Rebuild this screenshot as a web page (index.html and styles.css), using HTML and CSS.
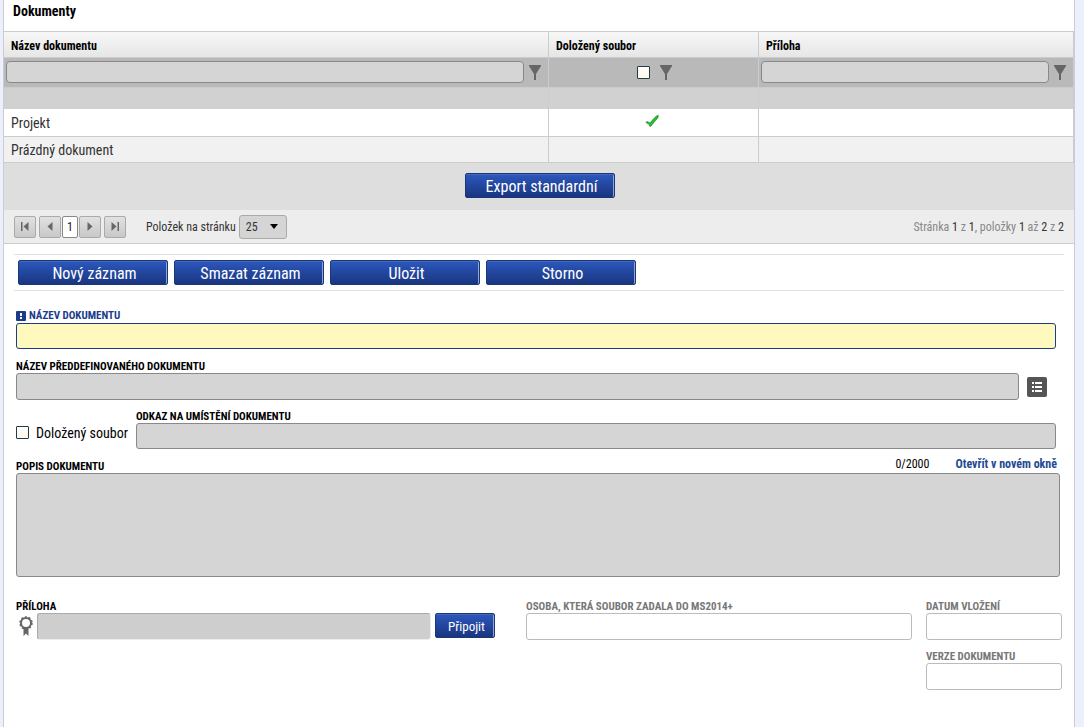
FILE: index.html
```
<!DOCTYPE html>
<html lang="cs">
<head>
<meta charset="utf-8">
<meta name="viewport" content="width=device-width, initial-scale=1">
<title>Dokumenty</title>
<link rel="stylesheet" href="styles.css">
</head>
<body>
<main class="panel">
  <h1 class="title">Dokumenty</h1>

  <section class="grid">
    <table class="grid-table">
      <colgroup><col><col class="col-file"><col class="col-attachment"></colgroup>
      <thead>
        <tr class="head-row">
          <th scope="col">Název dokumentu</th>
          <th scope="col">Doložený soubor</th>
          <th scope="col">Příloha</th>
        </tr>
        <tr class="filter-row">
          <td>
            <div class="filter">
              <input class="filter-input" type="text" aria-label="Filtr: Název dokumentu">
              <button class="filter-button" type="button" aria-label="Filtrovat název"><svg width="12" height="15" viewBox="0 0 12 15"><path d="M0 0h12v1L7 9v6H5V9L0 1z"/></svg></button>
            </div>
          </td>
          <td>
            <div class="filter filter-center">
              <input class="check" type="checkbox" aria-label="Filtr: Doložený soubor">
              <button class="filter-button" type="button" aria-label="Filtrovat soubor"><svg width="12" height="15" viewBox="0 0 12 15"><path d="M0 0h12v1L7 9v6H5V9L0 1z"/></svg></button>
            </div>
          </td>
          <td>
            <div class="filter">
              <input class="filter-input" type="text" aria-label="Filtr: Příloha">
              <button class="filter-button" type="button" aria-label="Filtrovat přílohu"><svg width="12" height="15" viewBox="0 0 12 15"><path d="M0 0h12v1L7 9v6H5V9L0 1z"/></svg></button>
            </div>
          </td>
        </tr>
      </thead>
      <tbody>
        <tr class="group-row"><td></td><td></td><td></td></tr>
        <tr class="data-row">
          <td>Projekt</td>
          <td class="tick-cell"><svg class="tick" role="img" aria-label="Ano" width="14" height="14" viewBox="0 0 14 14"><path d="M.5 8.500L2 7l3 1.500L8 5l3-3 2.500-1.500v3L10.500 7 6 12.500l-1 .5-1.500-2.500z" fill="#25a52b"/><path d="M3 9l2.500 1.500L11.500 3.500" fill="none" stroke="#45cc48"/></svg></td>
          <td></td>
        </tr>
        <tr class="data-row alt">
          <td>Prázdný dokument</td>
          <td></td>
          <td></td>
        </tr>
      </tbody>
    </table>
    <div class="export-bar"><button class="button" type="button">Export standardní</button></div>
    <div class="pager">
      <nav class="pager-nav" aria-label="Stránkování">
        <button class="page-button" type="button" aria-label="První"><svg width="8" height="9" viewBox="0 0 8 9"><path d="M0 0h1.500v9H0zM7.500 0v9L2.500 4.500z"/></svg></button>
        <div class="page-group">
          <button class="page-button" type="button" aria-label="Předchozí"><svg width="8" height="9" viewBox="0 0 8 9"><path d="M6.500 0v9L1.500 4.500z"/></svg></button>
          <a class="page-current" href="#" aria-current="page">1</a>
          <button class="page-button" type="button" aria-label="Další"><svg width="8" height="9" viewBox="0 0 8 9"><path d="M1.500 0v9L6.500 4.500z"/></svg></button>
        </div>
        <button class="page-button" type="button" aria-label="Poslední"><svg width="8" height="9" viewBox="0 0 8 9"><path d="M6.500 0H8v9H6.500zM.5 0v9L5.500 4.500z"/></svg></button>
      </nav>
      <div class="page-size">
        <label for="size">Položek na stránku</label>
        <span class="select-wrap">
          <select id="size" class="select"><option>25</option><option>50</option></select>
          <svg class="select-arrow" width="8" height="5" viewBox="0 0 8 5"><path d="M0 0h8L4 5z"/></svg>
        </span>
      </div>
      <p class="page-info">Stránka <b>1</b> z <b>1</b>, položky <b>1</b> až <b>2</b> z <b>2</b></p>
    </div>
  </section>

  <div class="toolbar">
    <button class="button" type="button">Nový záznam</button>
    <button class="button" type="button">Smazat záznam</button>
    <button class="button" type="button">Uložit</button>
    <button class="button" type="button">Storno</button>
  </div>

  <form class="form">
    <div class="field inset">
      <label class="label required" for="name"><svg width="10" height="10" viewBox="0 0 10 10"><rect width="10" height="10" rx="1" fill="#1b3b8c"/><path d="M4 2h2v3H4zM4 6h2v2H4z" fill="#fff"/></svg>NÁZEV DOKUMENTU</label>
      <input id="name" class="input input-low input-required" type="text" required>
    </div>
    <div class="field inset">
      <label class="label" for="predefined">NÁZEV PŘEDDEFINOVANÉHO DOKUMENTU</label>
      <div class="lookup">
        <input id="predefined" class="input" type="text">
        <button class="lookup-button" type="button" aria-label="Vybrat ze seznamu"><svg width="20" height="20" viewBox="0 0 20 20"><path d="M5 5h2v2H5zM8 5h7v2H8zM5 9h2v2H5zM8 9h7v2H8zM5 13h2v2H5zM8 13h7v2H8z" fill="#fff"/></svg></button>
      </div>
    </div>
    <div class="link-row inset">
      <label class="check-label"><input class="check" type="checkbox"><span>Doložený soubor</span></label>
      <div class="field grow">
        <label class="label" for="link">ODKAZ NA UMÍSTĚNÍ DOKUMENTU</label>
        <input id="link" class="input input-low" type="text">
      </div>
    </div>
    <div class="field description">
      <div class="label-row">
        <label class="label" for="description">POPIS DOKUMENTU</label>
        <span class="counter">0/2000</span>
        <a class="open-link" href="#">Otevřít v novém okně</a>
      </div>
      <textarea id="description" class="input textarea"></textarea>
    </div>
    <div class="bottom">
      <div class="field">
        <label class="label" for="attachment">PŘÍLOHA</label>
        <div class="attach">
          <svg class="seal" width="14" height="20" viewBox="0 0 14 20"><path d="M4.500 11h5v9L7 17.500 4.500 20z" fill="#666"/><circle cx="7" cy="7" r="5" fill="#fff" stroke="#666" stroke-width="2"/><circle cx="7" cy="7" r="6" fill="none" stroke="#666" stroke-width="1.500" stroke-dasharray="2 1.770"/></svg>
          <input id="attachment" class="input input-attachment" type="text" readonly>
          <button class="button button-small" type="button">Připojit</button>
        </div>
      </div>
      <div class="field muted">
        <label class="label" for="person">OSOBA, KTERÁ SOUBOR ZADALA DO MS2014+</label>
        <input id="person" class="input" type="text" readonly>
      </div>
      <div class="side">
        <div class="field muted">
          <label class="label" for="date">DATUM VLOŽENÍ</label>
          <input id="date" class="input" type="text" readonly>
        </div>
        <div class="field muted">
          <label class="label" for="version">VERZE DOKUMENTU</label>
          <input id="version" class="input" type="text" readonly>
        </div>
      </div>
    </div>
  </form>
</main>
</body>
</html>
```
FILE: styles.css
```
* { box-sizing: border-box; }

body {
  margin: 0;
  min-height: 100vh;
  display: flex;
  padding: 0 9px 0 3px;
  background: #ecf0fd;
  color: #000;
  font: 12px/16px "Roboto Condensed", "Liberation Sans Narrow", Roboto, sans-serif;
}

button, input, select, textarea { font: inherit; margin: 0; }
svg { display: block; flex: none; }

.panel {
  flex: 1;
  min-width: 0;
  background: #fff;
  border: solid #ccc;
  border-width: 0 1px;
}

.title {
  margin: 0;
  padding: 1px 9px 10px;
  font-size: 14px;
  line-height: 20px;
}

/* Document grid */
.grid-table {
  width: 100%;
  table-layout: fixed;
  border-collapse: separate;
  border-spacing: 0;
  border-top: 1px solid #ccc;
}
.col-file { width: 210px; }
.col-attachment { width: 315px; }
.grid-table th, .grid-table td {
  padding: 0 7px;
  border: solid #ccc;
  border-width: 0 1px 1px 0;
  text-align: left;
}
.head-row th { height: 26px; padding-top: 2px; background: linear-gradient(#f7f7f7, #e6e6e6); }
.grid-table .filter-row td { height: 30px; padding: 0 2px; background: #b9b9b9; }
.grid-table .group-row td { height: 21px; background: #d1d1d1; border-bottom-color: #d1d1d1; }
.data-row td { height: 28px; color: #333; font-size: 14px; background: #fff; }
.data-row.alt td { height: 26px; background: #f1f1f1; }
.grid-table .tick-cell { padding: 0 9px 4px 5px; }
.tick { margin: 0 auto; }

.filter { display: flex; align-items: center; gap: 5px; padding-bottom: 1px; }
.filter-center { justify-content: center; gap: 10px; padding: 0 0 0 2px; }
.filter-input {
  flex: 1;
  min-width: 0;
  height: 22px;
  padding: 0 5px;
  border: 1px solid #898989;
  border-radius: 4px;
  background: #d5d5d5;
}
.filter-button { width: 17px; padding: 0; border: 0; background: none; fill: #666; }
.filter-center .filter-button { width: 12px; }

.check {
  appearance: none;
  width: 13px;
  height: 13px;
  border: 1px solid #1c4048;
  border-radius: 1px;
  background: linear-gradient(#fff, #fff9e9);
}

.export-bar {
  display: flex;
  justify-content: center;
  padding: 10px 0 12px 2px;
  background: #dedede;
}

/* Pager */
.pager {
  display: flex;
  align-items: center;
  gap: 19px;
  height: 34px;
  padding: 0 10px;
  border-bottom: 1px solid #ccc;
  background: #ededed;
  color: #333;
}
.pager-nav { display: flex; gap: 3px; padding-right: 1px; }
.page-group { display: flex; gap: 1px; }
.page-button {
  display: flex;
  align-items: center;
  justify-content: center;
  width: 22px;
  height: 22px;
  padding: 0;
  border: 1px solid #aaa;
  border-radius: 2px;
  background: linear-gradient(#e1e1e1, #c8c8c8);
  fill: #666;
}
.page-current {
  width: 16px;
  height: 22px;
  border: 1px solid #888;
  border-radius: 2px;
  background: #fff;
  color: #222;
  line-height: 20px;
  text-align: center;
  text-decoration: none;
}
.page-size { display: flex; align-items: center; gap: 3px; }
.select-wrap { position: relative; }
.select {
  display: block;
  appearance: none;
  width: 48px;
  height: 24px;
  padding: 0 6px;
  border: 1px solid #aaa;
  border-radius: 3px;
  background: #d5d5d5;
  color: #333;
}
.select-arrow { position: absolute; top: 9px; right: 9px; pointer-events: none; }
.page-info { margin: 0 0 0 auto; color: #888; }
.page-info b { color: #333; font-weight: 400; }

/* Buttons */
.button {
  width: 150px;
  height: 25px;
  padding: 2px 0 0 3px;
  border: 1px solid #1b3778;
  border-radius: 2px;
  background: linear-gradient(#2d58be, #19357f);
  box-shadow: inset 0 1px #4268b8, inset -1px 0 #8ea5d5;
  color: #fff;
  font-size: 16px;
  line-height: 20px;
}
.button-small { flex: none; width: 60px; font-size: 13px; }

.toolbar {
  display: flex;
  gap: 6px;
  margin: 10px 10px 0;
  padding: 5px 4px;
  border: solid #e2e2e2;
  border-width: 1px 0;
}

/* Detail form */
.form { padding: 18px 12px 20px; }
.field { display: flex; flex-direction: column; }
.inset { margin-right: 6px; }
.grow { flex: 1; min-width: 0; }
.label {
  height: 14px;
  font-size: 11px;
  line-height: 16px;
  font-weight: 700;
  white-space: nowrap;
}
.required { display: flex; align-items: center; gap: 3px; color: #1b3b8c; }
.input {
  width: 100%;
  min-width: 0;
  height: 27px;
  padding: 0 6px;
  border: 1px solid #898989;
  border-radius: 3px;
  background: #d5d5d5;
}
.input-low { height: 26px; }
.input-required { border-color: #1b3b8c; background: #fff9be; }
.form > .inset { height: 50px; }
.lookup { display: flex; align-items: center; gap: 8px; margin-right: 9px; }
.lookup-button { padding: 0; border: 0; border-radius: 2px; background: #555; }
.link-row { display: flex; gap: 8px; }
.check-label {
  display: flex;
  align-items: center;
  gap: 7px;
  height: 46px;
  font-size: 14px;
  white-space: nowrap;
}
.check-label span { padding-top: 2px; }
.description { margin-right: 2px; }
.label-row { display: flex; height: 14px; padding-right: 3px; }
.counter { margin: -3px 26px 0 auto; }
.open-link { margin-top: -3px; color: #1f4a94; font-weight: 700; text-decoration: none; }
.textarea { height: 104px; resize: none; }
.bottom {
  display: grid;
  grid-template-columns: 496fr 386fr 136px;
  gap: 14px;
  margin-top: 22px;
}
.bottom > .field:first-child { margin-right: 17px; }
.attach { display: flex; align-items: flex-start; gap: 4px; padding-left: 3px; }
.seal { margin-top: 3px; }
.input-attachment { border-color: #aaa #eee #eee #aaa; background: #cecece; }
.side { display: grid; gap: 9px; }
.muted { color: #777; }
.muted .input { border-color: #bbb; background: #fff; }
```
